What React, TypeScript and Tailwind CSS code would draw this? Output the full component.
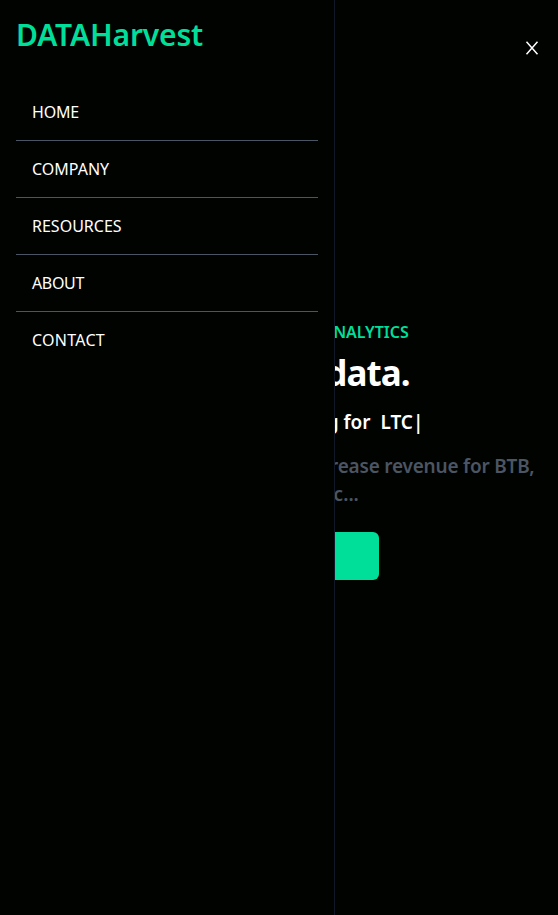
const menuItems = [
  { label: 'HOME', tracking: 'tracking-[-0.2px]' },
  { label: 'COMPANY', tracking: 'tracking-normal' },
  { label: 'RESOURCES', tracking: 'tracking-normal' },
  { label: 'ABOUT', tracking: 'tracking-[-0.35px]' },
  { label: 'CONTACT', tracking: 'tracking-[0.25px]' },
];

function Drawer() {
  return (
    <aside className="fixed left-0 top-0 h-full w-[60%] border-r border-r-[#111827] bg-[#000300]">
      <h1 className="mx-4 mt-[17px] text-3xl font-semibold leading-9 tracking-[-0.15px] text-[#00df9a]">
        DATAHarvest
      </h1>
      <ul className="mt-[31px] px-4">
        {menuItems.map(({ label, tracking }) => (
          <li key={label} className="border-b border-[#4b5563] p-4 leading-6 last:border-b-0">
            <span className={tracking}>{label}</span>
          </li>
        ))}
      </ul>
    </aside>
  );
}

export default function App() {
  return (
    <div className="h-[915px] overflow-hidden bg-[#000300] font-['Noto_Sans',sans-serif] text-white">
      <header className="flex h-24 items-center justify-end px-4">
        <button aria-label="Close menu" className="flex h-5 w-5 items-center justify-center">
          <svg width="20" height="20" viewBox="0 0 20 20" fill="none" stroke="currentColor" strokeWidth="1.5">
            <path d="M4.5 3.8L15.5 16.2M15.5 3.8L4.5 16.2" />
          </svg>
        </button>
      </header>
      <main className="flex flex-col items-center pt-[216px] text-center">
        <p className="p-2 pr-[9px] font-semibold leading-6 text-[#00df9a]">GROWING WITH DATA ANALYTICS</p>
        <h2 className="mb-[-1px] mt-px whitespace-nowrap pr-0.5 text-[35px] font-bold leading-10 tracking-[-0.9px]">
          Grow with data.
        </h2>
        <p className="whitespace-pre py-4 pr-1 text-[19px] font-semibold leading-7">
          {'Fast, flexible financing for  LTC|'}
        </p>
        <div className="whitespace-nowrap text-[19px] font-semibold leading-7 text-[#4b5563]">
          <p className="pl-px tracking-[-0.2px]">Monitor your data analytics to increase revenue for BTB,</p>
          <p className="pl-4">BTC, SASS, etc...</p>
        </div>
        <button className="my-6 h-12 w-[200px] rounded-md bg-[#00df9a] font-medium text-black">
          Get Started
        </button>
      </main>
      <Drawer />
    </div>
  );
}
